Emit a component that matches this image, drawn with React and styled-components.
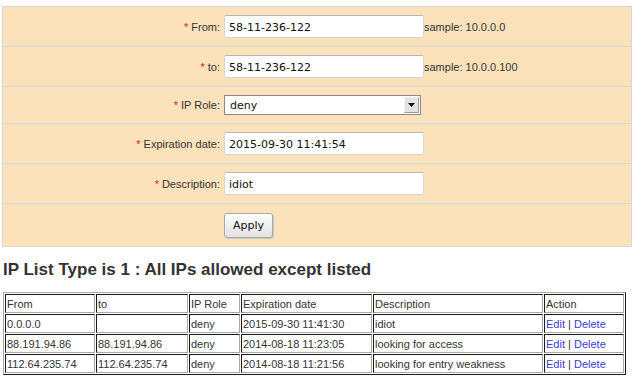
import React from "react";
import styled, { createGlobalStyle } from "styled-components";

const GlobalStyle = createGlobalStyle`
  body {
    margin: 0;
    background: #fff;
    font-family: "Liberation Sans", Arial, sans-serif;
    font-size: 11px;
    color: #333;
  }
`;

const Page = styled.div`
  padding: 6px 4px 0 2px;
`;

const Form = styled.div`
  width: 628px;
  border: 1px solid #d8d8d8;
  background: #fbe2bb;
`;

const Row = styled.div`
  display: grid;
  grid-template-columns: 217px auto 1fr;
  column-gap: 4px;
  align-items: center;
  padding: 8px 0;
  border-top: ${({ first }) => (first ? "none" : "1px solid #d8d8d8")};
`;

const Label = styled.label`
  text-align: right;
  color: #333;
`;

const Star = styled.span`
  color: #e0201a;
  margin-right: 3px;
`;

const Input = styled.input`
  box-sizing: border-box;
  width: 200px;
  height: 23px;
  padding: 2px 4px 0;
  border: 1px solid #d6d6d6;
  border-top-color: #b8b8b8;
  border-radius: 2px;
  background: #fff;
  font-family: "DejaVu Sans", sans-serif;
  font-size: 11px;
  color: #111;
  outline: none;
`;

const Hint = styled.span`
  margin-left: -4px;
  color: #333;
`;

const Select = styled.div`
  box-sizing: border-box;
  width: 197px;
  height: 20px;
  display: flex;
  align-items: center;
  justify-content: space-between;
  padding: 0 1px 0 5px;
  border: 1px solid #8a8a8a;
  background: #fff;
  font-family: "DejaVu Sans", sans-serif;
  font-size: 11px;
  color: #111;
`;

const Arrow = styled.span`
  box-sizing: border-box;
  width: 15px;
  height: 16px;
  display: flex;
  align-items: center;
  justify-content: center;
  border: 1px solid #9a9a9a;
  border-top-color: #f4f4f4;
  border-left-color: #f4f4f4;
  background: #e4e4e4;
`;

const Button = styled.button`
  box-sizing: border-box;
  width: 49px;
  height: 25px;
  margin-top: 1px;
  padding: 0;
  border: 1px solid #a9a9a9;
  border-radius: 3px;
  background: linear-gradient(#fefefe, #e2e2e2);
  box-shadow: 1px 1px 0 #c8c8c8;
  font-family: "DejaVu Sans", sans-serif;
  font-size: 11px;
  color: #111;
`;

const Title = styled.h2`
  margin: 13px 0 12px 1px;
  font-size: 17px;
  line-height: 20px;
  font-weight: bold;
  color: #333;
`;

const Table = styled.table`
  margin-left: 1px;
  width: 623px;
  table-layout: fixed;
  border-collapse: separate;
  border-spacing: 1px;
  border: 1px solid;
  border-color: #a8a8a8 #1a1a1a #1a1a1a #a8a8a8;
`;

const Cell = styled.td`
  box-sizing: border-box;
  width: ${({ w }) => w}px;
  height: 19px;
  padding: 0 1px;
  border: 1px solid;
  border-color: #1a1a1a #a8a8a8 #a8a8a8 #1a1a1a;
  font-size: 11px;
  font-weight: normal;
  text-align: left;
  color: #333;
  white-space: nowrap;
  overflow: hidden;
`;

const Link = styled.a`
  color: #3b3bd8;
  text-decoration: none;
`;

const widths = [90, 92, 51, 131, 170, 80];

const rows = [
  ["0.0.0.0", "", "deny", "2015-09-30 11:41:30", "idiot"],
  ["88.191.94.86", "88.191.94.86", "deny", "2014-08-18 11:23:05", "looking for access"],
  ["112.64.235.74", "112.64.235.74", "deny", "2014-08-18 11:21:56", "looking for entry weakness"],
];

function Field({ label, first, children }) {
  return (
    <Row first={first}>
      <Label>
        {label && <Star>*</Star>}
        {label}
      </Label>
      {children}
    </Row>
  );
}

export default function App() {
  return (
    <Page>
      <GlobalStyle />
      <Form>
        <Field label="From:" first>
          <Input defaultValue="58-11-236-122" />
          <Hint>sample: 10.0.0.0</Hint>
        </Field>
        <Field label="to:">
          <Input defaultValue="58-11-236-122" />
          <Hint>sample: 10.0.0.100</Hint>
        </Field>
        <Field label="IP Role:">
          <Select>
            deny
            <Arrow>
              <svg width="7" height="4" viewBox="0 0 7 4">
                <path d="M0 0h7L3.5 4z" fill="#111" />
              </svg>
            </Arrow>
          </Select>
          <span />
        </Field>
        <Field label="Expiration date:">
          <Input defaultValue="2015-09-30 11:41:54" />
          <span />
        </Field>
        <Field label="Description:">
          <Input defaultValue="idiot" />
          <span />
        </Field>
        <Field label="">
          <Button>Apply</Button>
          <span />
        </Field>
      </Form>
      <Title>IP List Type is 1 : All IPs allowed except listed</Title>
      <Table>
        <thead>
          <tr>
            {["From", "to", "IP Role", "Expiration date", "Description", "Action"].map((h, i) => (
              <Cell as="th" key={h} w={widths[i]}>
                {h}
              </Cell>
            ))}
          </tr>
        </thead>
        <tbody>
          {rows.map((r) => (
            <tr key={r[0]}>
              {r.map((c, i) => (
                <Cell key={i} w={widths[i]}>
                  {c}
                </Cell>
              ))}
              <Cell w={widths[5]}>
                <Link href="#">Edit</Link> | <Link href="#">Delete</Link>
              </Cell>
            </tr>
          ))}
        </tbody>
      </Table>
    </Page>
  );
}
